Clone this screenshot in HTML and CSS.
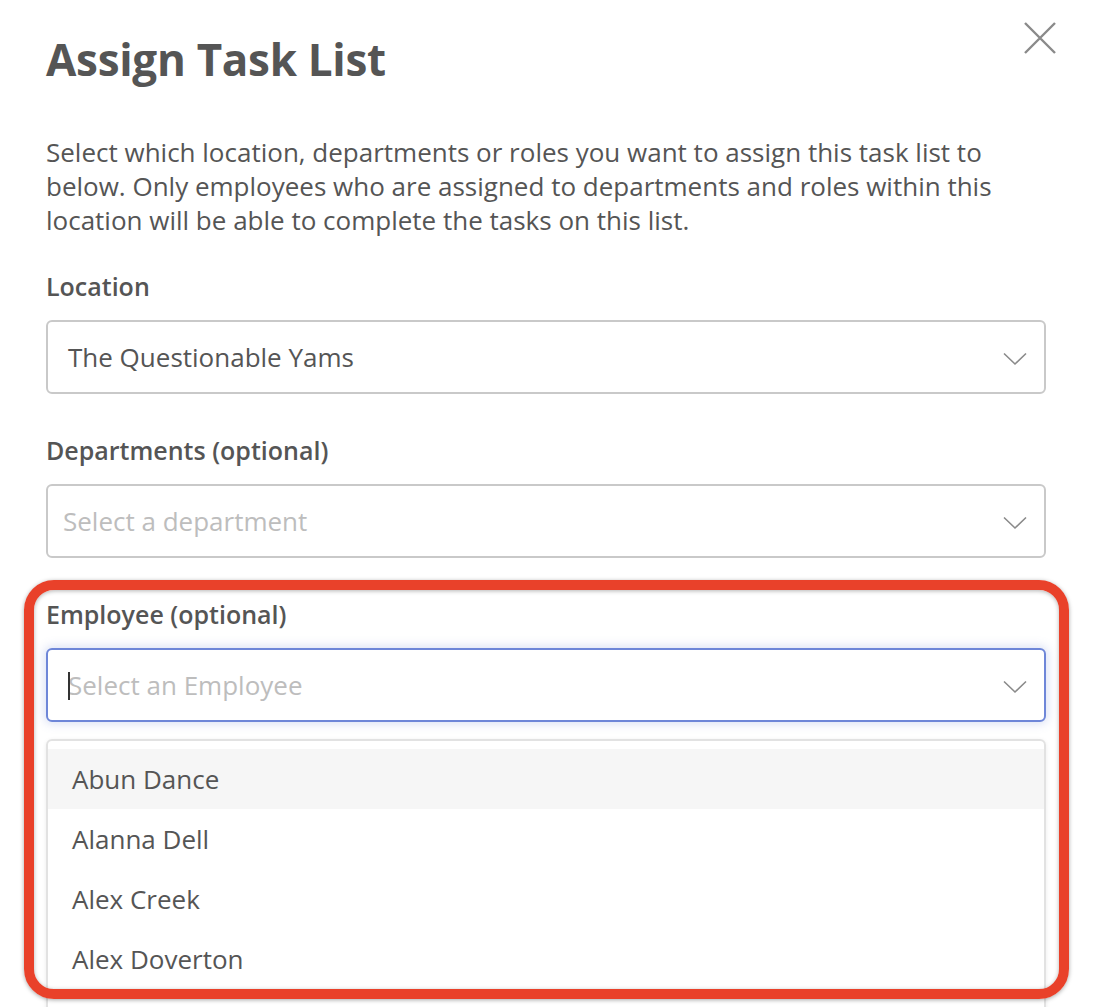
FILE: index.html
```html
<!DOCTYPE html>
<html lang="en">
<head>
	<meta charset="UTF-8">
	<meta name="viewport" content="width=device-width, initial-scale=1">
	<title>Assign Task List</title>
	<link rel="stylesheet" href="styles.css">
</head>
<body>
	<div class="modal">
		<button class="close" type="button" aria-label="Close">
			<svg width="34" height="34" viewBox="0 0 34 34"><path d="M2 2 L32 32 M32 2 L2 32" stroke="#8a8a8a" stroke-width="2.4" fill="none"/></svg>
		</button>
		<h1 class="modal-heading">Assign Task List</h1>
		<p class="modal-text">Select which location, departments or roles you want to assign this task list to below. Only employees who are assigned to departments and roles within this location will be able to complete the tasks on this list.</p>

		<div class="field">
			<label class="field-label">Location</label>
			<div class="select">
				<span class="select-value">The Questionable Yams</span>
				<svg class="chevron" width="24" height="14" viewBox="0 0 24 14"><path d="M1 1.5 L12 12 L23 1.5" stroke="#8a8a8a" stroke-width="1.6" fill="none"/></svg>
			</div>
		</div>

		<div class="field">
			<label class="field-label">Departments (optional)</label>
			<div class="select multi">
				<span class="select-value placeholder">Select a department</span>
				<svg class="chevron" width="24" height="14" viewBox="0 0 24 14"><path d="M1 1.5 L12 12 L23 1.5" stroke="#8a8a8a" stroke-width="1.6" fill="none"/></svg>
			</div>
		</div>

		<div class="field">
			<label class="field-label">Employee (optional)</label>
			<div class="select focused">
				<span class="select-value placeholder">Select an Employee</span>
				<svg class="chevron" width="24" height="14" viewBox="0 0 24 14"><path d="M1 1.5 L12 12 L23 1.5" stroke="#8a8a8a" stroke-width="1.6" fill="none"/></svg>
			</div>
			<ul class="menu">
				<li class="menu-item active">Abun Dance</li>
				<li class="menu-item">Alanna Dell</li>
				<li class="menu-item">Alex Creek</li>
				<li class="menu-item">Alex Doverton</li>
			</ul>
		</div>

		<div class="highlight"></div>
	</div>
</body>
</html>
```

FILE: styles.css
```css
* {
	box-sizing: border-box;
}

html, body {
	margin: 0;
	height: 100%;
	overflow: hidden;
}

body {
	font-family: 'Open Sans', 'Noto Sans', sans-serif;
	color: #555;
	background-color: #fff;
}

.modal {
	position: relative;
	width: 1102px;
	padding: 29px 56px 0 46px;
}

.close {
	position: absolute;
	top: 21px;
	right: 45px;
	padding: 0;
	border: none;
	background: none;
	cursor: pointer;
}

.close svg {
	display: block;
}

.modal-heading {
	margin: 0;
	font-size: 44px;
	line-height: 60px;
	font-weight: 700;
	letter-spacing: -0.3px;
	color: #555;
}

.modal-text {
	margin: 46px 0 34px;
	font-size: 26px;
	line-height: 34px;
	color: #555;
}

.field {
	margin-bottom: 41px;
}

.field-label {
	display: block;
	margin-bottom: 19px;
	font-size: 25px;
	line-height: 30px;
	font-weight: 600;
	color: #555;
}

.select {
	position: relative;
	display: flex;
	align-items: center;
	justify-content: space-between;
	height: 74px;
	padding: 0 17px 0 20px;
	border: 2px solid #c9c9c9;
	border-radius: 6px;
	background-color: #fff;
}

.select.multi {
	padding-left: 15px;
}

.select-value {
	font-size: 26px;
	color: #555;
}

.placeholder {
	color: #bdbdbd;
}

.chevron {
	margin-top: 4px;
}

.focused {
	border-color: #6e86d8;
	box-shadow: 0 0 10px 2px rgba(110, 134, 216, 0.25);
}

.focused::before {
	content: '';
	position: absolute;
	left: 20px;
	top: 22px;
	width: 2px;
	height: 28px;
	background-color: #333;
}

.menu {
	list-style: none;
	margin: 17px 0 0;
	padding: 8px 0 40px;
	border: 2px solid #e2e2e2;
	border-radius: 6px;
	box-shadow: 0 1px 4px rgba(0, 0, 0, 0.08);
}

.menu-item {
	height: 60px;
	line-height: 60px;
	padding-left: 24px;
	font-size: 26px;
	color: #555;
}

.menu-item.active {
	background-color: #f6f6f6;
}

.highlight {
	position: absolute;
	left: 24px;
	top: 580px;
	width: 1045px;
	height: 419px;
	border: 10px solid #e9412a;
	border-radius: 30px;
	box-shadow: 0 1px 4px rgba(0, 0, 0, 0.35), inset 0 1px 4px rgba(0, 0, 0, 0.3);
	pointer-events: none;
}
```
